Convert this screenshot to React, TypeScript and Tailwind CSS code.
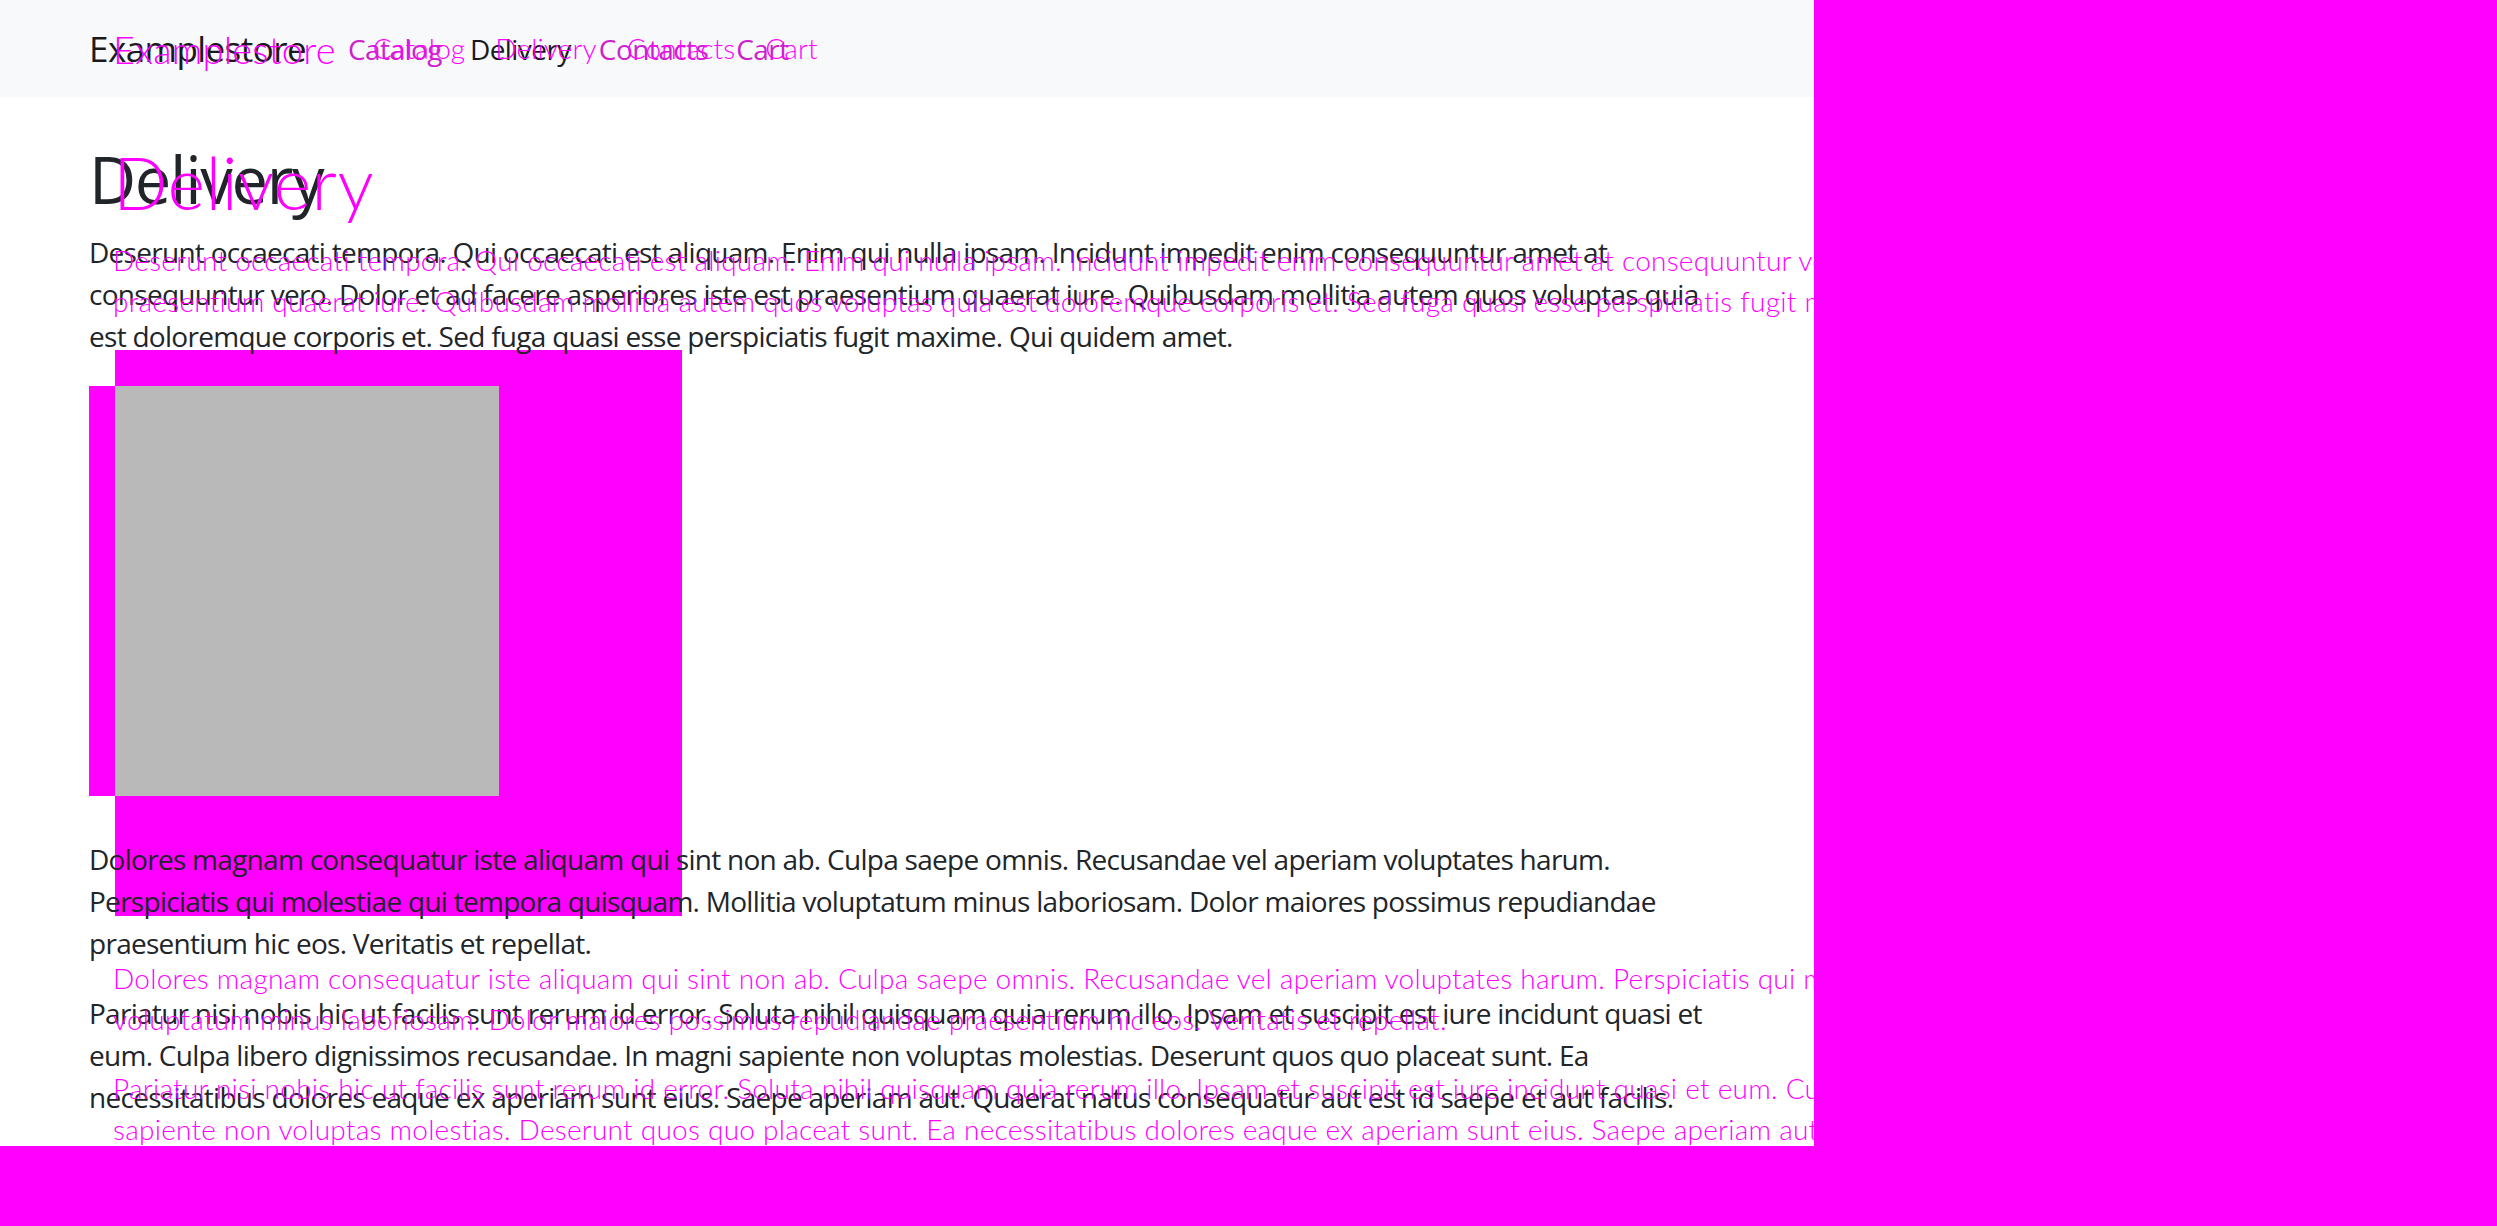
const links = ["Catalog", "Delivery", "Contacts", "Cart"];

const intro = [
  "Deserunt occaecati tempora. Qui occaecati est aliquam. Enim qui nulla ipsam. Incidunt impedit enim consequuntur amet at",
  "consequuntur vero. Dolor et ad facere asperiores iste est praesentium quaerat iure. Quibusdam mollitia autem quos voluptas quia",
  "est doloremque corporis et. Sed fuga quasi esse perspiciatis fugit maxime. Qui quidem amet.",
];

const middle = [
  "Dolores magnam consequatur iste aliquam qui sint non ab. Culpa saepe omnis. Recusandae vel aperiam voluptates harum.",
  "Perspiciatis qui molestiae qui tempora quisquam. Mollitia voluptatum minus laboriosam. Dolor maiores possimus repudiandae",
  "praesentium hic eos. Veritatis et repellat.",
];

const last = [
  "Pariatur nisi nobis hic ut facilis sunt rerum id error. Soluta nihil quisquam quia rerum illo. Ipsam et suscipit est iure incidunt quasi et",
  "eum. Culpa libero dignissimos recusandae. In magni sapiente non voluptas molestias. Deserunt quos quo placeat sunt. Ea",
  "necessitatibus dolores eaque ex aperiam sunt eius. Saepe aperiam aut. Quaerat natus consequatur aut est id saepe et aut facilis.",
];

// second (offset) rendering of the same page, drawn over it
const ghostIntro = [
  "Deserunt occaecati tempora. Qui occaecati est aliquam. Enim qui nulla ipsam. Incidunt impedit enim consequuntur amet at consequuntur vero. Dolor et ad facere asperiores iste est",
  "praesentium quaerat iure. Quibusdam mollitia autem quos voluptas quia est doloremque corporis et. Sed fuga quasi esse perspiciatis fugit maxime. Qui quidem amet.",
];

const ghostMiddle = [
  "Dolores magnam consequatur iste aliquam qui sint non ab. Culpa saepe omnis. Recusandae vel aperiam voluptates harum. Perspiciatis qui molestiae qui tempora quisquam. Mollitia",
  "voluptatum minus laboriosam. Dolor maiores possimus repudiandae praesentium hic eos. Veritatis et repellat.",
];

const ghostLast = [
  "Pariatur nisi nobis hic ut facilis sunt rerum id error. Soluta nihil quisquam quia rerum illo. Ipsam et suscipit est iure incidunt quasi et eum. Culpa libero dignissimos recusandae. In magni",
  "sapiente non voluptas molestias. Deserunt quos quo placeat sunt. Ea necessitatibus dolores eaque ex aperiam sunt eius. Saepe aperiam aut. Quaerat natus consequatur aut est id saepe et aut facilis.",
];

function Lines({ lines }: { lines: string[] }) {
  return (
    <>
      {lines.map((line, i) => (
        <span key={i} className="block whitespace-nowrap">
          {line}
        </span>
      ))}
    </>
  );
}

export default function App() {
  return (
    <div className="h-[1226px] w-[2497px] overflow-hidden bg-[#ff00ff]">
      <div className="relative h-[1146px] w-[1814px] overflow-hidden bg-white font-['Open_Sans',sans-serif] tracking-[-0.045em] text-[#212529]">
        <nav className="flex h-[97px] items-center bg-[#f8f9fa] pl-[89px] tracking-[-0.035em]">
          <a className="mr-[28px] text-[35px] leading-[52px] text-[#1a1a1a]">Examplestore</a>
          <ul className="flex text-[28px] leading-[42px]">
            {links.map((l) => (
              <li
                key={l}
                className={l === "Delivery" ? "px-[14px] text-[#1a1a1a]" : "px-[14px] text-[#cc22cc]"}
              >
                {l}
              </li>
            ))}
          </ul>
        </nav>

        <main className="relative z-0 w-[1727px] pl-[89px] pt-[43px]">
          <div className="absolute left-[115px] top-[253px] -z-10 h-[566px] w-[567px] bg-[#ff00ff]" />
          <h1 className="mb-[12px] text-[65px] font-medium leading-[79px] tracking-[-0.02em]">Delivery</h1>
          <p className="mb-[29px] text-[28px] leading-[42px]">
            <Lines lines={intro} />
          </p>
          <div className="mb-[42px] flex h-[410px] w-[410px] bg-[#ff00ff]">
            <div className="w-[26px]" />
            <div className="flex-1 bg-[#b9b9b9]" />
          </div>
          <p className="mb-[28px] text-[28px] leading-[42px]">
            <Lines lines={middle} />
          </p>
          <p className="text-[28px] leading-[42px]">
            <Lines lines={last} />
          </p>
        </main>

        <div
          aria-hidden
          className="pointer-events-none absolute inset-0 pl-[113px] font-['Lato',sans-serif] font-light tracking-[0.016em] text-[#ff00ff]"
        >
          <div className="flex h-[97px] items-center">
            <span className="mr-[22px] text-[38px] leading-[52px] tracking-[0.005em]">Examplestore</span>
            {links.map((l) => (
              <span key={l} className="px-[15px] text-[28px] leading-[41px] tracking-[0.005em]">
                {l}
              </span>
            ))}
          </div>
          <div className="mt-[43px] text-[72px] leading-[84px] tracking-[0.005em]">Delivery</div>
          <div className="mt-[16px] text-[28px] leading-[41px]">
            <Lines lines={ghostIntro} />
          </div>
          <div className="mt-[636px] text-[28px] leading-[41px]">
            <Lines lines={ghostMiddle} />
          </div>
          <div className="mt-[28px] text-[28px] leading-[41px]">
            <Lines lines={ghostLast} />
          </div>
        </div>
      </div>
    </div>
  );
}
